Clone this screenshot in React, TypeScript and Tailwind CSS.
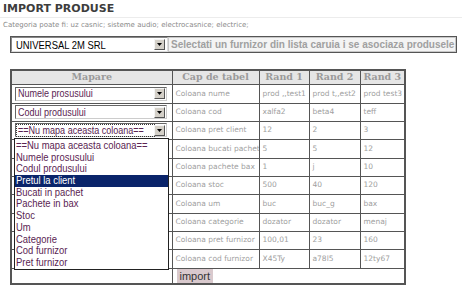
import React from "react";

const arial = { fontFamily: '"Liberation Sans", Arial, sans-serif' };

const rows = [
  { map: "Numele prosusului", cap: "Coloana nume", r: ["prod ,,test1", "prod t,,est2", "prod test3"], h: "h-[19px]" },
  { map: "Codul produsului", cap: "Coloana cod", r: ["xalfa2", "beta4", "teff"], h: "h-[18px]" },
  { map: "==Nu mapa aceasta coloana==", cap: "Coloana pret client", r: ["12", "2", "3"], h: "h-[18px]", open: true },
  { cap: "Coloana bucati pachet", r: ["5", "5", "12"], h: "h-[19px]" },
  { cap: "Coloana pachete bax", r: ["1", "j", "10"], h: "h-[18px]" },
  { cap: "Coloana stoc", r: ["500", "40", "120"], h: "h-[18px]" },
  { cap: "Coloana um", r: ["buc", "buc_g", "bax"], h: "h-[19px]" },
  { cap: "Coloana categorie", r: ["dozator", "dozator", "menaj"], h: "h-[18px]" },
  { cap: "Coloana pret furnizor", r: ["100,01", "23", "160"], h: "h-[18px]" },
  { cap: "Coloana cod furnizor", r: ["X45Ty", "a78l5", "12ty67"], h: "h-[19px]" },
];

const options = [
  "==Nu mapa aceasta coloana==",
  "Numele prosusului",
  "Codul produsului",
  "Pretul la client",
  "Bucati in pachet",
  "Pachete in bax",
  "Stoc",
  "Um",
  "Categorie",
  "Cod furnizor",
  "Pret furnizor",
];

function Narrow({ children }: { children: React.ReactNode }) {
  return <span className="inline-block origin-left scale-x-[0.82] whitespace-nowrap">{children}</span>;
}

function Arrow() {
  return (
    <div className="w-[11px] h-[11px] bg-[#d4d0c8] border border-t-[#f4f4f4] border-l-[#f4f4f4] border-r-[#555] border-b-[#555] flex items-center justify-center shrink-0">
      <svg width="5" height="3" viewBox="0 0 5 3">
        <path d="M0 0 H5 L2.5 3 Z" fill="#000" />
      </svg>
    </div>
  );
}

function FakeSelect({ text, focus }: { text: string; focus?: boolean }) {
  return (
    <div className="w-[152px] h-[14px] bg-white border border-t-[#666] border-l-[#666] border-r-[#ccc] border-b-[#ccc] flex items-center pl-[1px] pr-[1px]">
      <div
        className={`flex-1 h-[11px] overflow-hidden whitespace-nowrap text-[11px] leading-[11px] pl-[1px] text-[#5a2452] ${focus ? "outline outline-1 outline-dotted outline-[#333]" : ""}`}
        style={arial}
      >
        <Narrow>{text}</Narrow>
      </div>
      <Arrow />
    </div>
  );
}

export default function App() {
  const small = { fontFamily: '"DejaVu Sans", Verdana, sans-serif' };
  return (
    <div className="w-[462px] h-[301px] bg-white overflow-hidden relative">
      <div
        className="h-[18px] pl-[3px] pt-[2px] text-[11px] leading-[14px] font-bold text-[#3d3d3d] border-b border-[#ececec]"
        style={small}
      >
        IMPORT PRODUSE
      </div>
      <div className="pl-[3px] mt-[1px] h-[12px] text-[7px] leading-[12px] text-[#8a8a8a]" style={small}>
        Categoria poate fi: uz casnic; sisteme audio; electrocasnice; electrice;
      </div>

      <div className="ml-[10px] mt-[5px] w-[447px] h-[17px] border border-[#555] flex">
        <div className="w-[157px] h-full bg-white border border-t-[#888] border-l-[#888] border-r-[#ddd] border-b-[#ddd] flex items-center pl-[4px] pr-[2px]">
          <div className="flex-1 text-[11.5px] leading-[12px] text-black whitespace-nowrap overflow-hidden" style={arial}>
            <Narrow>UNIVERSAL 2M SRL</Narrow>
          </div>
          <Arrow />
        </div>
        <div
          className="flex-1 h-full bg-[#f4f4f4] border border-[#c8c8c8] flex items-center pl-[2px] text-[10px] font-bold text-[#a0a0a0] whitespace-nowrap overflow-hidden"
          style={arial}
        >
          Selectati un furnizor din lista caruia i se asociaza produsele
        </div>
      </div>

      <table className="ml-[10px] mt-[16px] border-collapse border-2 border-[#555] table-fixed w-[394px] text-[8px] leading-[10px]">
        <colgroup>
          <col className="w-[161px]" />
          <col className="w-[87px]" />
          <col className="w-[50px]" />
          <col className="w-[51px]" />
          <col className="w-[45px]" />
        </colgroup>
        <thead>
          <tr className="h-[14px] bg-[#e6e6e6]">
            {["Mapare", "Cap de tabel", "Rand 1", "Rand 2", "Rand 3"].map((t) => (
              <th
                key={t}
                className="border border-[#555] p-0 text-[9.5px] leading-[12px] font-bold text-[#9a9a9a] text-center whitespace-nowrap"
                style={{ fontFamily: '"DejaVu Serif", Georgia, serif' }}
              >
                {t}
              </th>
            ))}
          </tr>
        </thead>
        <tbody>
          {rows.map((row, i) => (
            <tr key={i} className={row.h}>
              <td className="border border-[#555] p-0 pl-[3px] align-middle">
                {row.map ? (
                  <div className="relative">
                    <FakeSelect text={row.map} focus={row.open} />
                    {row.open && (
                      <div className="absolute left-[-1px] top-[15px] w-[155px] bg-white border border-[#222] z-10 pt-[1px]">
                        {options.map((o) => (
                          <div
                            key={o}
                            className={`h-[11.7px] text-[11.5px] leading-[11.7px] pl-[1px] whitespace-nowrap ${
                              o === "Pretul la client" ? "bg-[#0a246a] text-white" : "text-[#5a2452]"
                            }`}
                            style={arial}
                          >
                            <Narrow>{o}</Narrow>
                          </div>
                        ))}
                      </div>
                    )}
                  </div>
                ) : null}
              </td>
              <td
                className="border border-[#555] p-0 pl-[3px] text-[7.5px] text-[#a0a0a0] whitespace-nowrap overflow-hidden align-middle"
                style={small}
              >
                {row.cap}
              </td>
              {row.r.map((v, j) => (
                <td
                  key={j}
                  className="border border-[#555] p-0 pl-[3px] text-[7.5px] text-[#a0a0a0] whitespace-nowrap overflow-hidden align-middle"
                  style={small}
                >
                  {v}
                </td>
              ))}
            </tr>
          ))}
          <tr className="h-[16px]">
            <td className="border border-[#555] p-0"></td>
            <td colSpan={4} className="border border-[#555] p-0 pl-[4px] align-middle">
              <div
                className="w-fit bg-[#d9c9cd] px-[3px] h-[14px] text-[11px] leading-[14px] text-[#333]"
                style={arial}
              >
                import
              </div>
            </td>
          </tr>
        </tbody>
      </table>
    </div>
  );
}
